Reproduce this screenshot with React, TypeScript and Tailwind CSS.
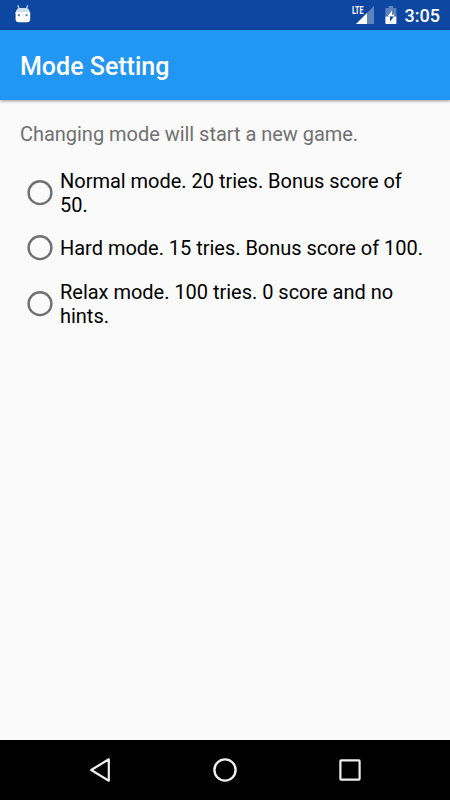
const modes = [
  { id: "normal", lines: ["Normal mode. 20 tries. Bonus score of", "50."] },
  { id: "hard", lines: ["Hard mode. 15 tries. Bonus score of 100."] },
  { id: "relax", lines: ["Relax mode. 100 tries. 0 score and no", "hints."] },
];

function DroidIcon() {
  return (
    <svg className="w-4 h-5" viewBox="0 0 16 20">
      <path d="M3 0.3L4 4M12.6 0.3L11.6 4" stroke="#b9c9e3" strokeWidth="1.4" fill="none" />
      <path d="M0.6 9C0.8 4.8 2.4 3 5 3h5.6C13.2 3 14.9 4.8 15.1 9z" fill="#cfdcec" />
      <path d="M0.6 7h14.6v7.2c0 1.9-1.2 3-3.1 3H3.7c-1.9 0-3.1-1.1-3.1-3z" fill="white" />
      <rect x="3" y="9.2" width="2" height="2" fill="#5f82c2" />
      <rect x="10.6" y="9.2" width="2" height="2" fill="#5f82c2" />
    </svg>
  );
}

function SignalIcon() {
  return (
    <svg className="w-6 h-5 overflow-visible" viewBox="0 0 24 20">
      <path d="M23 1V19H5z" fill="#5e82bb" />
      <path d="M0 0H14V10H0z" fill="#0d47a1" />
      <path d="M16 8V19H5z" fill="white" />
      <text
        x="1"
        y="9"
        fontSize="11"
        fontWeight="700"
        fill="white"
        textLength="11.5"
        lengthAdjust="spacingAndGlyphs"
      >
        LTE
      </text>
    </svg>
  );
}

function BatteryIcon() {
  return (
    <svg className="w-3 h-5" viewBox="0 0 12 20">
      <path d="M3.6 1h4.6v2h3.2v8.5H0.4V3h3.2z" fill="#5e82bb" />
      <path d="M0.4 11.5h11v6.7a0.8 0.8 0 0 1-0.8 0.8H1.2a0.8 0.8 0 0 1-0.8-0.8z" fill="white" />
      <path d="M7 5.5V11.5H2.6z" fill="white" />
      <path d="M2.6 11.5H5v5.3L9.4 10.4H7v1.1z" fill="#0d47a1" />
      <path d="M7 9.8H9.6L8.6 11.5H7z" fill="white" />
    </svg>
  );
}

function StatusBar() {
  return (
    <div className="h-[30px] bg-[#0d47a1] flex items-center justify-between pl-[14.5px] pr-[10px]">
      <DroidIcon />
      <div className="flex items-center text-white">
        <SignalIcon />
        <div className="ml-[10px]">
          <BatteryIcon />
        </div>
        <span className="ml-2 pt-px text-[18px] font-medium leading-none">3:05</span>
      </div>
    </div>
  );
}

function Radio() {
  return (
    <svg className="w-[26px] h-[26px] shrink-0" viewBox="0 0 26 26" fill="none">
      <circle cx="13" cy="12.7" r="11.4" stroke="#707070" strokeWidth="2.4" />
    </svg>
  );
}

export default function App() {
  return (
    <div className="w-[450px] h-[800px] flex flex-col bg-[#fafafa] font-['Roboto',sans-serif] overflow-hidden">
      <StatusBar />
      <header className="h-[70px] bg-[#2196f3] flex items-center px-5 pt-[3px] shadow-[0_1px_3px_rgba(0,0,0,0.4)]">
        <h1 className="text-[25px] font-medium text-white whitespace-nowrap">Mode Setting</h1>
      </header>
      <main className="flex-1 px-5 pt-5">
        <p className="text-[20px] leading-[28px] tracking-[-0.03px] text-[#707070] whitespace-nowrap">
          Changing mode will start a new game.
        </p>
        <div className="mt-[17px]">
          {modes.map((mode) => (
            <label key={mode.id} className="flex items-center h-[55.5px] pl-[7px]">
              <Radio />
              <span className="ml-[7px] text-[20px] leading-[24px] tracking-[-0.02px] text-black whitespace-nowrap">
                {mode.lines.map((line) => (
                  <span key={line} className="block">
                    {line}
                  </span>
                ))}
              </span>
            </label>
          ))}
        </div>
      </main>
      <nav className="h-[60px] bg-black flex items-center justify-center gap-[99px]">
        <svg className="w-[26px] h-[26px]" viewBox="0 0 26 26" fill="none" stroke="#eeeeee" strokeWidth="2.2">
          <path d="M21.8 2.3V23.7L4.2 13z" strokeLinejoin="round" />
        </svg>
        <svg className="w-[26px] h-[26px]" viewBox="0 0 26 26" fill="none" stroke="#eeeeee" strokeWidth="2.4">
          <circle cx="13" cy="13" r="10.6" />
        </svg>
        <svg className="w-[26px] h-[26px]" viewBox="0 0 26 26" fill="none" stroke="#eeeeee" strokeWidth="2.2">
          <rect x="3.4" y="3.4" width="19.2" height="19.2" rx="0.8" />
        </svg>
      </nav>
    </div>
  );
}
